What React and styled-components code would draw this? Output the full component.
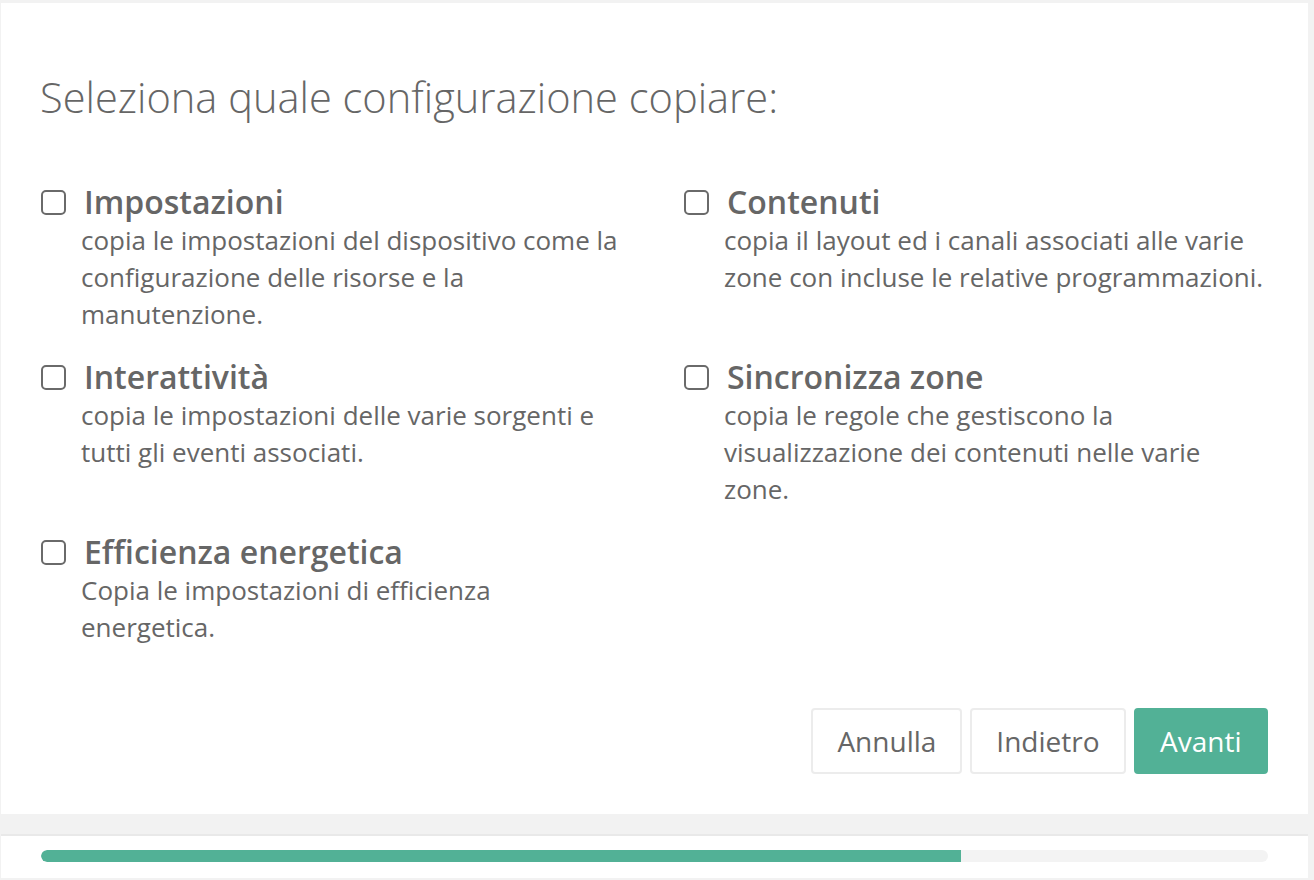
import React, { useState } from "react";
import styled, { createGlobalStyle } from "styled-components";

const Global = createGlobalStyle`
  html, body { margin: 0; padding: 0; background: #f2f2f2; }
  body { font-family: "Open Sans", "Liberation Sans", sans-serif; color: #666; }
  * { box-sizing: border-box; }
`;

const Page = styled.div`
  width: 1314px;
  height: 880px;
  padding: 3px 6px 0 1px;
  display: flex;
  flex-direction: column;
`;

const Card = styled.div`
  background: #fff;
  padding: 71px 40px 40px 39px;
  display: flex;
  flex-direction: column;
  height: 811px;
`;

const Title = styled.h1`
  margin: 0;
  font-size: 41.6px;
  font-weight: 300;
  line-height: 46px;
  color: #666;
`;

const Grid = styled.div`
  margin-top: 62px;
  display: grid;
  grid-template-columns: 1fr 1fr;
  column-gap: 58px;
`;

const Item = styled.div`
  display: flex;
  flex-direction: column;
  margin-bottom: 24px;
  padding-left: 1px;
`;

const Head = styled.label`
  display: flex;
  align-items: center;
  height: 40px;
  cursor: pointer;
`;

const Box = styled.span`
  width: 25px;
  height: 25px;
  border: 2px solid ${(p) => (p.$on ? "#52b196" : "#6a6a6a")};
  background: ${(p) => (p.$on ? "#52b196" : "#fff")};
  border-radius: 5px;
  flex: none;
  margin-right: 18px;
  display: flex;
  align-items: center;
  justify-content: center;
`;

const Label = styled.span`
  font-size: 32px;
  font-weight: 600;
  color: #666;
  line-height: 40px;
`;

const Desc = styled.p`
  margin: 0 0 0 40px;
  font-size: 26px;
  line-height: 37px;
  color: #666;
  font-weight: 400;
`;

const Footer = styled.div`
  margin-top: auto;
  display: flex;
  justify-content: flex-end;
  gap: 8px;
`;

const Button = styled.button`
  height: 66px;
  padding: 0 ${(p) => (p.$primary ? "24.5px" : "24px")};
  font-family: "Open Sans", "Liberation Sans", sans-serif;
  font-size: 28px;
  border-radius: 4px;
  border: 2px solid ${(p) => (p.$primary ? "#52b196" : "#ececec")};
  background: ${(p) => (p.$primary ? "#52b196" : "#fff")};
  color: ${(p) => (p.$primary ? "#fff" : "#666")};
  cursor: pointer;
`;

const Gap = styled.div`
  height: 20px;
  flex: none;
`;

const ProgressCard = styled.div`
  background: #fff;
  border-top: 2px solid #e9e9e9;
  height: 44px;
  padding: 14px 40px 0 40px;
`;

const Track = styled.div`
  height: 12px;
  border-radius: 6px;
  background: #f3f3f3;
  overflow: hidden;
`;

const Fill = styled.div`
  height: 100%;
  background: #52b196;
  border-radius: 6px 0 0 6px;
`;

const items = [
  {
    key: "imp",
    label: "Impostazioni",
    desc: "copia le impostazioni del dispositivo come la configurazione delle risorse e la manutenzione.",
  },
  {
    key: "con",
    label: "Contenuti",
    desc: "copia il layout ed i canali associati alle varie zone con incluse le relative programmazioni.",
  },
  {
    key: "int",
    label: "Interattività",
    desc: "copia le impostazioni delle varie sorgenti e tutti gli eventi associati.",
  },
  {
    key: "sin",
    label: "Sincronizza zone",
    desc: "copia le regole che gestiscono la visualizzazione dei contenuti nelle varie zone.",
  },
  {
    key: "eff",
    label: "Efficienza energetica",
    desc: "Copia le impostazioni di efficienza energetica.",
  },
];

export default function App() {
  const [sel, setSel] = useState({});
  const progress = 920 / 1227;
  return (
    <>
      <Global />
      <Page>
        <Card>
          <Title>Seleziona quale configurazione copiare:</Title>
          <Grid>
            {items.map((it) => (
              <Item key={it.key}>
                <Head onClick={() => setSel((s) => ({ ...s, [it.key]: !s[it.key] }))}>
                  <Box $on={!!sel[it.key]}>
                    {sel[it.key] && (
                      <svg width="14" height="14" viewBox="0 0 14 14">
                        <path d="M2 7l3.5 3.5L12 3.5" stroke="#fff" strokeWidth="2.2" fill="none" />
                      </svg>
                    )}
                  </Box>
                  <Label>{it.label}</Label>
                </Head>
                <Desc>{it.desc}</Desc>
              </Item>
            ))}
          </Grid>
          <Footer>
            <Button>Annulla</Button>
            <Button>Indietro</Button>
            <Button $primary>Avanti</Button>
          </Footer>
        </Card>
        <Gap />
        <ProgressCard>
          <Track>
            <Fill style={{ width: `${progress * 100}%` }} />
          </Track>
        </ProgressCard>
      </Page>
    </>
  );
}
